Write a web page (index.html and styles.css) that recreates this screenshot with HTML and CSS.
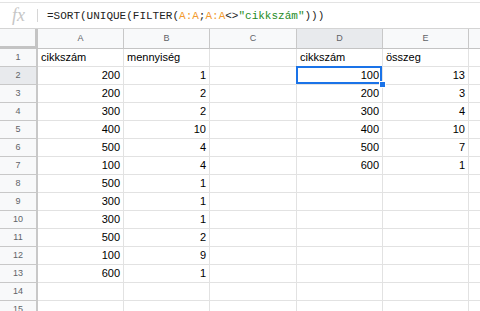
FILE: index.html
```html
<!DOCTYPE html>
<html>
<head>
<meta charset="utf-8">
<link rel="stylesheet" href="styles.css">
</head>
<body>
<div class="fbar">
  <div class="fx">fx</div>
  <div class="sep"></div>
  <div class="formula">=SORT(UNIQUE(FILTER(<span class="ref">A:A</span>;<span class="ref">A:A</span>&lt;&gt;<span class="str">"cikkszám"</span>)))</div>
</div>
<div class="grid">
  <div class="corner"></div><div class="ch">A</div><div class="ch">B</div><div class="ch">C</div><div class="ch sel">D</div><div class="ch">E</div><div class="ch last"></div>

  <div class="rh">1</div><div class="c">cikkszám</div><div class="c">mennyiség</div><div class="c"></div><div class="c">cikkszám</div><div class="c">összeg</div><div class="c last"></div>
  <div class="rh sel">2</div><div class="c n">200</div><div class="c n">1</div><div class="c"></div><div class="c n active">100</div><div class="c n">13</div><div class="c last"></div>
  <div class="rh">3</div><div class="c n">200</div><div class="c n">2</div><div class="c"></div><div class="c n">200</div><div class="c n">3</div><div class="c last"></div>
  <div class="rh">4</div><div class="c n">300</div><div class="c n">2</div><div class="c"></div><div class="c n">300</div><div class="c n">4</div><div class="c last"></div>
  <div class="rh">5</div><div class="c n">400</div><div class="c n">10</div><div class="c"></div><div class="c n">400</div><div class="c n">10</div><div class="c last"></div>
  <div class="rh">6</div><div class="c n">500</div><div class="c n">4</div><div class="c"></div><div class="c n">500</div><div class="c n">7</div><div class="c last"></div>
  <div class="rh">7</div><div class="c n">100</div><div class="c n">4</div><div class="c"></div><div class="c n">600</div><div class="c n">1</div><div class="c last"></div>
  <div class="rh">8</div><div class="c n">500</div><div class="c n">1</div><div class="c"></div><div class="c"></div><div class="c"></div><div class="c last"></div>
  <div class="rh">9</div><div class="c n">300</div><div class="c n">1</div><div class="c"></div><div class="c"></div><div class="c"></div><div class="c last"></div>
  <div class="rh">10</div><div class="c n">300</div><div class="c n">1</div><div class="c"></div><div class="c"></div><div class="c"></div><div class="c last"></div>
  <div class="rh">11</div><div class="c n">500</div><div class="c n">2</div><div class="c"></div><div class="c"></div><div class="c"></div><div class="c last"></div>
  <div class="rh">12</div><div class="c n">100</div><div class="c n">9</div><div class="c"></div><div class="c"></div><div class="c"></div><div class="c last"></div>
  <div class="rh">13</div><div class="c n">600</div><div class="c n">1</div><div class="c"></div><div class="c"></div><div class="c"></div><div class="c last"></div>
  <div class="rh">14</div><div class="c"></div><div class="c"></div><div class="c"></div><div class="c"></div><div class="c"></div><div class="c last"></div>
  <div class="rh">15</div><div class="c"></div><div class="c"></div><div class="c"></div><div class="c"></div><div class="c"></div><div class="c last"></div>
</div>
</body>
</html>
```
FILE: styles.css
```css
html, body {
  margin: 0;
  padding: 0;
  background: #fff;
  overflow: hidden;
}
body {
  width: 480px;
  height: 311px;
  font-family: "Liberation Sans", Arial, sans-serif;
}
.fbar {
  box-sizing: border-box;
  margin-top: 2px;
  height: 27px;
  border-top: 1px solid #e3e3e3;
  border-bottom: 1px solid #d4d4d4;
  display: flex;
  align-items: center;
}
.fx {
  width: 37px;
  text-align: center;
  font-family: "Liberation Serif", "DejaVu Serif", serif;
  font-style: italic;
  font-size: 18px;
  color: #c6c6c6;
  line-height: 20px;
  padding-bottom: 1px;
}
.sep {
  width: 1px;
  height: 13px;
  background: #d6d6d6;
}
.formula {
  margin-left: 9px;
  font-family: "Liberation Mono", "DejaVu Sans Mono", monospace;
  font-size: 11px;
  color: #222;
  white-space: nowrap;
}
.ref { color: #f29a2e; }
.str { color: #1e8c1e; }
.grid {
  display: grid;
  grid-template-columns: 38px 86px 86px 87px 86px 86px 1fr;
  grid-template-rows: 20px repeat(15, 18px);
}
.grid > div {
  box-sizing: border-box;
  border-right: 1px solid #e2e2e2;
  border-bottom: 1px solid #e2e2e2;
  white-space: nowrap;
  overflow: visible;
}
.corner {
  background: #f8f9fa;
  border-right: 3px solid #c4c4c4 !important;
  border-bottom: 3px solid #c4c4c4 !important;
}
.ch {
  background: #f8f9fa;
  border-right: 1px solid #c8c8c8 !important;
  border-bottom: 1px solid #c4c4c4 !important;
  font-size: 9px;
  color: #5f6368;
  text-align: center;
  line-height: 19px;
}
.ch.sel { background: #e8eaed; }
.ch.last { border-right: none !important; }
.rh {
  background: #f8f9fa;
  border-right: 2px solid #c8c8c8 !important;
  border-bottom: 1px solid #c8c8c8 !important;
  font-size: 9px;
  color: #5f6368;
  text-align: center;
  line-height: 17px;
}
.rh.sel { background: #e8eaed; }
.c {
  font-size: 11px;
  color: #000;
  line-height: 17px;
  padding: 0 3px;
}
.c.last { border-right: none !important; }
.n { text-align: right; }
.active { position: relative; }
.active::after {
  content: "";
  position: absolute;
  left: -1px;
  top: -1px;
  right: 0;
  bottom: 0;
  border: 2px solid #1a73e8;
}
.active::before {
  content: "";
  position: absolute;
  right: -4px;
  bottom: -4px;
  width: 5px;
  height: 5px;
  background: #1a73e8;
  border: 1px solid #fff;
  z-index: 2;
}
```
